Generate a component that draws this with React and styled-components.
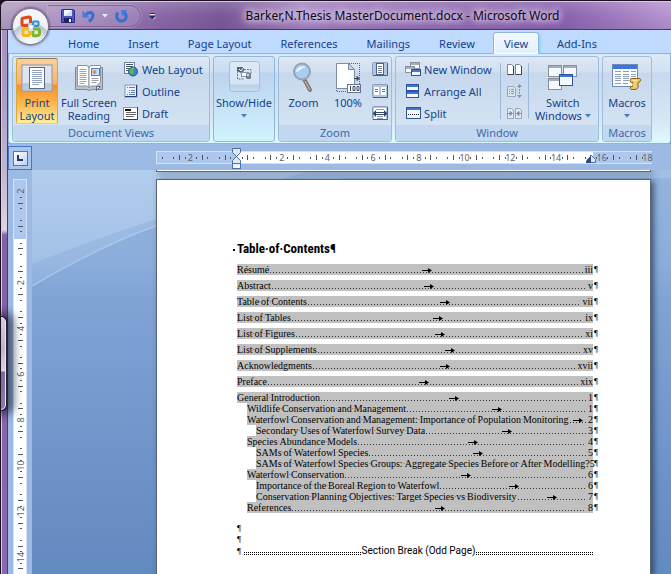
import React from "react"
import styled, { createGlobalStyle, css } from "styled-components"

const tabs = [
  "Home",
  "Insert",
  "Page Layout",
  "References",
  "Mailings",
  "Review",
  "View",
  "Add-Ins",
]

const toc = [
  { title: "Résumé", page: "iii", level: 0 },
  { title: "Abstract", page: "v", level: 0 },
  { title: "Table of Contents", page: "vii", level: 0 },
  { title: "List of Tables", page: "ix", level: 0 },
  { title: "List of Figures", page: "xi", level: 0 },
  { title: "List of Supplements", page: "xv", level: 0 },
  { title: "Acknowledgments", page: "xvii", level: 0 },
  { title: "Preface", page: "xix", level: 0 },
  { title: "General Introduction", page: "1", level: 1 },
  { title: "Wildlife Conservation and Management", page: "1", level: 2 },
  {
    title:
      "Waterfowl Conservation and Management: Importance of Population Monitoring",
    page: "2",
    level: 2,
  },
  { title: "Secondary Uses of Waterfowl Survey Data", page: "3", level: 3 },
  { title: "Species Abundance Models", page: "4", level: 2 },
  { title: "SAMs of Waterfowl Species", page: "5", level: 3 },
  {
    title:
      "SAMs of Waterfowl Species Groups: Aggregate Species Before or After Modelling?",
    page: "5",
    level: 3,
  },
  { title: "Waterfowl Conservation", page: "6", level: 2 },
  { title: "Importance of the Boreal Region to Waterfowl", page: "6", level: 3 },
  {
    title: "Conservation Planning Objectives: Target Species vs Biodiversity",
    page: "7",
    level: 3,
  },
  { title: "References", page: "8", level: 2 },
]

/* ---------- icons ---------- */

const OfficeLogo = () => (
  <svg width="22" height="24" viewBox="0 0 22 24" fill="none" strokeWidth="3">
    <path d="M8 10.500H3.500q-1.500 0-1.500-1.500V4.500Q2 3 3.500 3L9 2q1.500 0 1.500 1.500V8" stroke="#dc4a1c" />
    <path d="M13 10V7.500q0-1 1-1h3.500q1 0 1 1V10q0 1-1 1H14" stroke="#2f8fd8" strokeWidth="2" />
    <path d="M9 14H4q-1 0-1 1v4.500q0 1 1 1h4q1.500 0 1.500-1.500v-3" stroke="#f5b81c" />
    <path d="M13 14h5q1.500 0 1.500 1.500V19q0 1-1 1.200l-4 .8q-1.500 0-1.500-1.500V16" stroke="#7fb52a" />
    <rect x="9.500" y="10.500" width="3" height="3" fill="#fff" />
  </svg>
)

const SaveIcon = () => (
  <svg width="14" height="14" viewBox="0 0 14 14">
    <path d="M1 .5h11l1.500 1v12H.5V1z" fill="#4a55c0" stroke="#2a3190" />
    <rect x="3" y="1" width="8" height="6" fill="#f4f7ff" />
    <path d="M3 7 11 1v6z" fill="#cfdcf5" />
    <rect x="3" y="9" width="8" height="4.500" fill="#1e2360" />
    <rect x="8" y="10" width="2" height="3" fill="#fff" />
  </svg>
)

const UndoIcon = () => (
  <svg width="13" height="14" viewBox="0 0 13 14" fill="none">
    <path d="M4 5.500C7 2.500 11 3 11 6.500c0 3-2 4.500-4 6" stroke="#3470cf" strokeWidth="3" />
    <path d="M.5 1.500V8.500H7.500z" fill="#3f7ede" />
  </svg>
)

const RedoIcon = () => (
  <svg width="13" height="14" viewBox="0 0 13 14" fill="none">
    <path d="M3 3.500C.5 6.500 1.500 12 6.500 12s6-5.500 3-8" stroke="#3470cf" strokeWidth="3" />
    <path d="M6 1h6.500L7 7.500z" fill="#3f7ede" />
  </svg>
)

const Caret = ({ color = "#4a7ab8" }) => (
  <svg width="6" height="4" viewBox="0 0 6 4">
    <path d="M0 0h6L3 3.500z" fill={color} />
  </svg>
)

const CustomizeIcon = () => (
  <svg width="7" height="8" viewBox="0 0 7 8">
    <path d="M1 1.500h5" stroke="#20305c" />
    <path d="M1 2.500h5" stroke="#f3edfa" />
    <path d="M0 4h7L3.500 7.500z" fill="#20305c" />
    <path d="M4 7.500 7 4.500" stroke="#f3edfa" />
  </svg>
)

const PrintLayoutIcon = () => (
  <svg width="32" height="28" viewBox="0 0 32 28">
    <rect x="1" y="1" width="30" height="26" fill="#dbe4f0" stroke="#8796ad" />
    <path d="M2 19h28v7H2z" fill="#b9c9de" />
    <rect x="8.500" y="3.500" width="15" height="21" fill="#fff" stroke="#5b6b85" />
    <path
      d="M11 6.500h10M11 8.500h10M11 10.500h10M11 12.500h10M11 14.500h10M11 16.500h10M11 18.500h10M11 20.500h7"
      stroke="#94a3bd"
    />
  </svg>
)

const ReadingIcon = () => (
  <svg width="30" height="28" viewBox="0 0 30 28">
    <path d="M1.500 3.500h2V1.500h9l2.500 2 2.500-2h9v2h2v22h-11l-2.500 1-2.500-1h-11z" fill="#b8c1cd" stroke="#7d8896" />
    <path d="M3.500 1.500h8.500q3 0 3 3v19q-1-1.500-3-1.500H3.500z" fill="#fff" stroke="#8a94a2" />
    <path d="M26.500 1.500H18q-3 0-3 3v19q1-1.500 3-1.500h4.500l4-4z" fill="#fff" stroke="#8a94a2" />
    <path
      d="M5.500 5.500h7M5.500 7.500h7M5.500 9.500h7M5.500 11.500h7M5.500 13.500h7M5.500 15.500h7M5.500 17.500h7M5.500 19.500h5M17.500 14.500h7M17.500 16.500h7M17.500 18.500h5"
      stroke="#9aa3b0"
    />
    <rect x="17.500" y="4.500" width="8" height="7" fill="#bfe0ff" stroke="#4c83c8" />
    <circle cx="20.500" cy="8" r="2" fill="#f08a4a" />
    <path d="M22.500 26.500v-4h4z" fill="#e8eef5" stroke="#5c6876" />
  </svg>
)

const WebLayoutIcon = () => (
  <svg width="14" height="15" viewBox="0 0 14 15">
    <rect x=".5" y=".5" width="10" height="11" fill="#fff" stroke="#70809c" />
    <path d="M2 2.500h7M2 4.500h7M2 6.500h4M2 8.500h3" stroke="#44546f" />
    <circle cx="9" cy="9.500" r="4.500" fill="#3d7fd6" stroke="#24529a" />
    <path d="M6 7c2-2 4-2 5-1l-2 2 1 2-2 3c-2-1-3-3-2-6z" fill="#5dbb3f" />
  </svg>
)

const OutlineIcon = () => (
  <svg width="14" height="14" viewBox="0 0 14 14">
    <rect x="1" y="1" width="12" height="12" fill="#e9f0fa" stroke="#8798b8" />
    <path d="M12.500 1v11.500H1" stroke="#2c3d66" fill="none" />
    <path d="M3 3.500h1M5 3.500h6M5 6.500h1M7 6.500h4M5 8.500h1M7 8.500h4M3 10.500h1M5 10.500h6" stroke="#5d7fc0" />
  </svg>
)

const DraftIcon = () => (
  <svg width="15" height="13" viewBox="0 0 15 13">
    <rect x=".5" y=".5" width="14" height="12" fill="#fff" stroke="#8798b8" />
    <path d="M14.500 0v12.500H0" stroke="#2c3d66" fill="none" />
    <path d="M2 3h6" stroke="#111" strokeWidth="2" />
    <path d="M3 5.500h10M3 7.500h10M3 9.500h8" stroke="#666" />
  </svg>
)

const ShowHideIcon = () => (
  <svg width="16" height="15" viewBox="0 0 16 15">
    <path d="M1.500 2v11h6M8 3.500h7v4" stroke="#6f7a8d" fill="none" strokeDasharray="2 1" />
    <path d="M1 1h7v4L5 7 1 5z" fill="#5b6475" />
    <path d="m3 3 2 2 3-4" stroke="#fff" fill="none" />
    <rect x="5.500" y="6.500" width="7" height="4" fill="#fff" stroke="#8c96a8" />
    <rect x="10" y="7" width="5" height="6" rx="1" fill="#7c7f8e" />
    <rect x="11" y="8" width="2" height="2" fill="#d8dbe2" />
  </svg>
)

const ZoomIcon = () => (
  <svg width="24" height="31" viewBox="0 0 24 31">
    <path d="m12 17 6 11" stroke="#81726c" strokeWidth="4" strokeLinecap="round" />
    <path d="m13 19 5 9" stroke="#c2b0a6" strokeWidth="1.500" />
    <circle cx="10" cy="9.500" r="8" fill="#a9ccf3" stroke="#97a2b2" strokeWidth="2" />
    <path d="M4 10c0-5 7-7 10-4-4-1-6 4-10 4z" fill="#e8f3ff" />
  </svg>
)

const HundredIcon = () => (
  <svg width="26" height="31" viewBox="0 0 26 31">
    <path d="M12 1.500h12.500v21M1.500 22v7.500H12" stroke="#55617a" fill="none" strokeDasharray="1 1" />
    <path d="M1.500 1.500h12l6 6v19h-18z" fill="#fdfeff" stroke="#7d8aa3" />
    <path d="M13.500 1.500v6h6z" fill="#c8d4e6" stroke="#7d8aa3" />
    <path d="M19 16.500h4M22 14.500v4l2-2z" stroke="#36435c" fill="#36435c" />
    <rect x="12.500" y="22.500" width="13" height="8" fill="#fff" stroke="#66738e" />
    <path d="M15.500 24v5M18 24.500h2v4h-2zM22 24.500h2v4h-2z" stroke="#3c4658" fill="none" />
  </svg>
)

const PageFrame = ({ children }) => (
  <svg width="16" height="16" viewBox="0 0 16 16">
    <rect x=".5" y="1.500" width="15" height="13" rx="1" fill="#b3c6e0" stroke="#8a9dbd" />
    <path d="M15.500 2v12.500H1" stroke="#4a5d82" fill="none" />
    {children}
  </svg>
)

const OnePageIcon = () => (
  <PageFrame>
    <rect x="4.500" y="2.500" width="7" height="11" fill="#fff" stroke="#4d6187" />
    <path d="M6 5.500h4M6 7.500h4M6 9.500h4M6 11.500h4" stroke="#6b7da0" />
  </PageFrame>
)

const TwoPagesIcon = () => (
  <PageFrame>
    <rect x="2" y="4" width="5" height="8" fill="#fff" />
    <rect x="9" y="4" width="5" height="8" fill="#fff" />
    <path d="M3 6.500h3M3 8.500h3M10 6.500h3M10 8.500h3" stroke="#60759c" />
  </PageFrame>
)

const PageWidthIcon = () => (
  <PageFrame>
    <rect x="2" y="3" width="12" height="11" fill="#fff" />
    <path d="M4 4.500h8M5 11.500h6M5 13.500h6" stroke="#8b98b4" />
    <path d="M2 7.500h12M2 9.500h12" stroke="#33466c" />
    <path d="M4 5 .5 8.500 4 12zM12 5l3.500 3.500L12 12z" fill="#33466c" />
  </PageFrame>
)

const MiniWindow = ({ x, y, w, h, active }) => (
  <g>
    <rect x={x + 0.5} y={y + 0.5} width={w} height={h} fill="#f5f8fc" stroke={active ? "#2d549c" : "#8a909a"} />
    <rect x={x + 1} y={y + 1} width={w - 1} height="2" fill={active ? "#3f76dc" : "#a7adb7"} />
  </g>
)

const NewWindowIcon = () => (
  <svg width="16" height="15" viewBox="0 0 16 15">
    <MiniWindow x={5} y={0} w={9} h={6} />
    <MiniWindow x={0} y={4} w={9} h={6} />
    <MiniWindow x={6} y={7} w={9} h={6} active />
  </svg>
)

const ArrangeIcon = () => (
  <svg width="14" height="14" viewBox="0 0 14 14">
    <MiniWindow x={0} y={0} w={12} h={6} active />
    <MiniWindow x={0} y={7} w={12} h={6} active />
  </svg>
)

const SplitIcon = () => (
  <svg width="15" height="13" viewBox="0 0 15 13">
    <MiniWindow x={0} y={0} w={14} h={11} active />
    <path d="M2 7.500h11" stroke="#222" strokeDasharray="1 1" />
  </svg>
)

const SideBySideIcon = () => (
  <svg width="17" height="13" viewBox="0 0 17 13">
    <path d="M1.500 1.500h4l2 2v8h-6zM9.500 1.500h4l2 2v8h-6z" fill="#fff" stroke="#7c8598" />
    <path d="M7.500 3v8.500h-6M15.500 3v8.500h-6" stroke="#39435a" fill="none" />
  </svg>
)

const SyncScrollIcon = () => (
  <svg width="17" height="14" viewBox="0 0 17 14">
    <path d="M1.500 2.500h6l2 2v8h-8z" fill="#dfe5ee" stroke="#9aa5b8" />
    <path d="M3 5.500h1M5 5.500h3M3 7.500h1M5 7.500h3M3 9.500h1M5 9.500h3" stroke="#8793a8" />
    <path d="M13.500 2v10" stroke="#8793a8" strokeDasharray="2 1" />
    <path d="m11 3 2.500-3L16 3zM11 11l2.500 3 2.500-3z" fill="#8793a8" />
  </svg>
)

const ResetWindowIcon = () => (
  <svg width="17" height="13" viewBox="0 0 17 13">
    <path d="M1.500 1.500h4l2 2v8h-6zM9.500 1.500h4l2 2v8h-6z" fill="#e3e9f1" stroke="#9aa5b8" />
    <path d="M1 6.500h4M16 6.500h-4M4 4.500v4l2.500-2zM13 4.500v4l-2.500-2z" stroke="#8391a8" fill="#8391a8" />
  </svg>
)

const SwitchWindowsIcon = () => (
  <svg width="30" height="26" viewBox="0 0 30 26">
    <MiniWindow x={0} y={0} w={13} h={11} />
    <MiniWindow x={15} y={0} w={13} h={11} />
    <MiniWindow x={0} y={13} w={13} h={11} />
    <MiniWindow x={11} y={9} w={13} h={11} active />
  </svg>
)

const MacrosIcon = () => (
  <svg width="30" height="27" viewBox="0 0 30 27">
    <rect x=".5" y=".5" width="25" height="22" fill="#fbfdff" stroke="#6f8ab8" />
    <rect x="1" y="1" width="24" height="4" fill="#3f74d8" />
    <path
      d="M3 7.500h6M11 7.500h6M19 7.500h5M3 10.500h6M11 10.500h6M19 10.500h5M3 12.500h6M11 12.500h6M19 12.500h5M3 14.500h6M11 14.500h6M3 16.500h6M11 16.500h6M3 19.500h6M11 19.500h5"
      stroke="#8f9db8"
    />
    <path d="M19 14.500h9q1.500 1 0 3l-2 1v5q-1 2-3 2h-4q-2-1 0-3h2v-4h-2q-2-2 0-4z" fill="#f0c860" stroke="#8c6417" />
    <path d="M21 16.500h4M22 19v4" stroke="#fff1b8" />
  </svg>
)

/* ---------- rulers ---------- */

const UNIT = 22.86

const RulerMarks = ({ origin, from, to, vertical }) => {
  const marks = []
  for (let q = from * 4; q <= to * 4; q++) {
    const at = origin + (q * UNIT) / 4
    if (q === 0) continue
    if (q % 8 === 0) {
      marks.push(
        <text
          key={q}
          x={vertical ? 0 : at}
          y={vertical ? 0 : 10}
          transform={vertical ? `translate(10 ${at}) rotate(-90)` : undefined}
          textAnchor="middle"
        >
          {Math.abs(q / 4)}
        </text>
      )
    } else if (q % 4 !== 0) {
      const half = q % 2 === 0
      const a = half ? 4 : 6
      const b = half ? 9 : 8
      const p = Math.round(at)
      marks.push(
        <rect
          key={q}
          x={vertical ? a : p}
          y={vertical ? p : a}
          width={vertical ? b - a : 1}
          height={vertical ? 1 : b - a}
          fill="#4c5563"
        />
      )
    }
  }
  return <>{marks}</>
}

const HorizontalMarks = () => (
  <svg width="502" height="22" viewBox="0 -3 502 22">
    <RulerMarks origin={80} from={-3.25} to={18} />
    <path d="M76.500-2.500h8v4l-4 4-4-4zM76.500 12.500v-3l4-4 4 4v3z" fill="#dce8f8" stroke="#4c6fa8" />
    <rect x="76.500" y="12.500" width="8" height="5" fill="#eef4fc" stroke="#4c6fa8" />
    <path d="M431.500 11.500v-3l4-4 4 4v3z" fill="#dce8f8" stroke="#4c6fa8" />
    <path d="M430 12v-2l5-5v7z" fill="#2f4a78" />
  </svg>
)

const VerticalMarks = () => (
  <svg width="13" height="400" viewBox="0 0 13 400">
    <RulerMarks origin={57} from={-2} to={15} vertical />
  </svg>
)

/* ---------- ribbon parts ---------- */

const BigButton = ({ icon, lines, caret, active }) => (
  <Big $active={active}>
    <BigIcon>{icon}</BigIcon>
    {lines.map((line, i) => (
      <BigLine key={line}>
        {line}
        {caret && i === 1 && <Caret />}
      </BigLine>
    ))}
    {caret && lines.length === 1 && (
      <BigLine>
        <Caret />
      </BigLine>
    )}
  </Big>
)

const SmallButton = ({ icon, label }) => (
  <Small>
    <SmallIcon>{icon}</SmallIcon>
    {label}
  </Small>
)

const IconButton = ({ icon, label, disabled }) => (
  <IconOnly aria-label={label} disabled={disabled}>
    {icon}
  </IconOnly>
)

/* spaces are shown as formatting marks */
const MarkedText = ({ children }) => (
  <span>
    {children.split(" ").map((word, i) => (
      <React.Fragment key={i}>
        {i > 0 && <SpaceMark>·</SpaceMark>}
        {word}
      </React.Fragment>
    ))}
  </span>
)

const TocEntry = ({ title, page, level }) => (
  <TocRow $level={level}>
    <TocLink href="#">
      <MarkedText>{title}</MarkedText>
      <Leader>
        <svg width="10" height="5" viewBox="0 0 10 5">
          <path d="M0 2h6V0l4 2.500L6 5V3H0z" fill="#000" />
        </svg>
      </Leader>
      <span>{page}</span>
    </TocLink>
    <Pilcrow>¶</Pilcrow>
  </TocRow>
)

const App = () => {
  return (
    <>
      <GlobalStyle />
      <Window>
        <TitleBar>
          <OfficeButton aria-label="Office Button">
            <OfficeLogo />
          </OfficeButton>
          <QuickAccess>
            <IconButton icon={<SaveIcon />} label="Save" />
            <IconButton icon={<UndoIcon />} label="Undo" />
            <IconButton icon={<Caret color="#dcecff" />} label="Undo history" />
            <IconButton icon={<RedoIcon />} label="Redo" />
          </QuickAccess>
          <IconButton icon={<CustomizeIcon />} label="Customize toolbar" />
          <WindowTitle>
            Barker,N.Thesis MasterDocument.docx - Microsoft Word
          </WindowTitle>
        </TitleBar>
        <Frame>
          <LeftEdge />
          <Client>
            <TabStrip role="tablist">
              {tabs.map(tab => (
                <Tab
                  key={tab}
                  role="tab"
                  aria-selected={tab === "View"}
                  $active={tab === "View"}
                >
                  {tab}
                </Tab>
              ))}
            </TabStrip>

            <Ribbon>
              <Group $width={198}>
                <GroupBody>
                  <BigButton icon={<PrintLayoutIcon />} lines={["Print", "Layout"]} active />
                  <BigButton icon={<ReadingIcon />} lines={["Full Screen", "Reading"]} />
                  <Column>
                    <SmallButton icon={<WebLayoutIcon />} label="Web Layout" />
                    <SmallButton icon={<OutlineIcon />} label="Outline" />
                    <SmallButton icon={<DraftIcon />} label="Draft" />
                  </Column>
                </GroupBody>
                <GroupLabel>Document Views</GroupLabel>
              </Group>
              <Group $width={62} $collapsed>
                <ShowHide>
                  <ShowHideBox>
                    <ShowHideIcon />
                  </ShowHideBox>
                  <BigLine>Show/Hide</BigLine>
                  <BigLine>
                    <Caret />
                  </BigLine>
                </ShowHide>
              </Group>
              <Group $width={114}>
                <GroupBody $spread>
                  <BigButton icon={<ZoomIcon />} lines={["Zoom"]} />
                  <BigButton icon={<HundredIcon />} lines={["100%"]} />
                  <Column>
                    <IconButton icon={<OnePageIcon />} label="One Page" />
                    <IconButton icon={<TwoPagesIcon />} label="Two Pages" />
                    <IconButton icon={<PageWidthIcon />} label="Page Width" />
                  </Column>
                </GroupBody>
                <GroupLabel>Zoom</GroupLabel>
              </Group>
              <Group $width={204}>
                <GroupBody $spread>
                  <Column>
                    <SmallButton icon={<NewWindowIcon />} label="New Window" />
                    <SmallButton icon={<ArrangeIcon />} label="Arrange All" />
                    <SmallButton icon={<SplitIcon />} label="Split" />
                  </Column>
                  <Column $ruled>
                    <IconButton icon={<SideBySideIcon />} label="View Side by Side" />
                    <IconButton icon={<SyncScrollIcon />} label="Synchronous Scrolling" disabled />
                    <IconButton icon={<ResetWindowIcon />} label="Reset Window Position" disabled />
                  </Column>
                  <BigButton icon={<SwitchWindowsIcon />} lines={["Switch", "Windows"]} caret />
                </GroupBody>
                <GroupLabel>Window</GroupLabel>
              </Group>
              <Group $width={50}>
                <GroupBody $spread>
                  <BigButton icon={<MacrosIcon />} lines={["Macros"]} caret />
                </GroupBody>
                <GroupLabel>Macros</GroupLabel>
              </Group>
            </Ribbon>

            <Workspace>
              <RulerCorner>
                <TabStop aria-label="Left tab">
                  <svg width="6" height="6" viewBox="0 0 6 6">
                    <path d="M1 0v5h5" stroke="#22395f" strokeWidth="2" fill="none" />
                  </svg>
                </TabStop>
              </RulerCorner>
              <HorizontalRuler>
                <HorizontalScale>
                  <HorizontalMarks />
                </HorizontalScale>
              </HorizontalRuler>
              <VerticalRuler>
                <VerticalScale>
                  <VerticalMarks />
                </VerticalScale>
              </VerticalRuler>
              <Canvas>
                <Swoosh viewBox="0 0 639 404" preserveAspectRatio="none">
                  <path d="M0 94Q60 70 124 49T280 0H639V404H0z" fill="#6f97cc" opacity=".22" />
                  <path d="M0 116Q70 75 124 56T310 8H639V404H0z" fill="#5c88c4" opacity=".2" />
                  <path d="M0 116Q70 75 124 56" stroke="#c5daf3" strokeWidth="1.500" opacity=".5" fill="none" />
                </Swoosh>
                <PreviousPage />
                <Page>
                  <Heading>Table·of·Contents¶</Heading>
                  <Toc>
                    {toc.map(entry => (
                      <TocEntry key={entry.title} {...entry} />
                    ))}
                  </Toc>
                  <Paragraph>¶</Paragraph>
                  <Paragraph>¶</Paragraph>
                  <SectionBreak>
                    <Pilcrow>¶</Pilcrow>
                    <BreakDots />
                    <BreakLabel>Section Break (Odd Page)</BreakLabel>
                    <BreakDots />
                  </SectionBreak>
                </Page>
              </Canvas>
            </Workspace>
          </Client>
        </Frame>
        <OtherWindow />
      </Window>
    </>
  )
}

const GlobalStyle = createGlobalStyle`
  * {
    box-sizing: border-box;
  }
  body {
    margin: 0;
    background: #1c1226;
    font-family: "Noto Sans", "Open Sans", sans-serif;
    font-size: 11px;
  }
  button {
    border: 0;
    padding: 0;
    background: none;
    font: inherit;
    color: inherit;
  }
  svg {
    display: block;
    flex: none;
  }
`

const Window = styled.div`
  position: relative;
  display: flex;
  flex-direction: column;
  height: 100vh;
  overflow: hidden;
  border: 1px solid #1a1020;
  border-right: 0;
  border-bottom: 0;
  border-radius: 7px 0 0 0;
  background: #9d80bf;
`

const TitleBar = styled.header`
  position: relative;
  display: flex;
  align-items: center;
  flex: none;
  height: 29px;
  padding: 0 0 0 47px;
  border-top: 1px solid #d9c9e6;
  border-bottom: 1px solid #4b3763;
  background:
    linear-gradient(rgba(255, 255, 255, 0.15), rgba(255, 255, 255, 0) 50%, rgba(90, 60, 130, 0.15)),
    linear-gradient(90deg, #b3a1c0 0, #a58bb9 10%, #8a68a6 24%, #7a5897 33%, #a584c0 45%, #9370b4 62%, #8a62ad 84%, #b795d2);
`

const OfficeButton = styled.button`
  position: absolute;
  left: 11px;
  top: 6px;
  z-index: 2;
  display: flex;
  align-items: center;
  justify-content: center;
  width: 37px;
  height: 37px;
  border: 1px solid #77718a;
  border-radius: 50%;
  background: radial-gradient(circle at 50% 100%, #fff 0, #dfe5ee 35%, #b8c3d4 52%, #eef1f6 56%, #f8fafc 100%);
  box-shadow: 0 0 2px 1px rgba(50, 40, 80, 0.5);
`

const QuickAccess = styled.div`
  display: flex;
  align-items: center;
  gap: 7px;
  height: 22px;
  margin: 0 8px 0 0;
  padding: 0 12px 0 13px;
  border: 1px solid #80699a;
  border-left: 0;
  border-radius: 0 11px 11px 0;
  background: rgba(200, 180, 220, 0.25);
  box-shadow: 0 0 0 1px rgba(225, 210, 240, 0.25);
`

const WindowTitle = styled.span`
  flex: 1;
  padding-right: 22px;
  color: #0c0812;
  font-size: 12px;
  white-space: nowrap;
  text-align: center;
  text-shadow: 0 0 6px #e6daf0, 0 0 8px #e6daf0, 0 0 10px #e6daf0;
`

const Frame = styled.div`
  display: flex;
  flex: 1;
  min-height: 0;
`

const LeftEdge = styled.div`
  flex: none;
  width: 7px;
  border-left: 1px solid #d9cce4;
  border-right: 1px solid #4b3f66;
  background: linear-gradient(#a891bd 0, #ab9bc6 60px, #c4bad3 150px, #ded4e2 200px, #8063a5 205px, #8a69b0);
`

const Client = styled.main`
  display: flex;
  flex-direction: column;
  flex: 1;
  min-width: 0;
`

const TabStrip = styled.nav`
  display: flex;
  align-items: flex-end;
  gap: 7px;
  flex: none;
  height: 24px;
  padding-left: 49px;
  background: #bfdbff;
  border-bottom: 1px solid #8db2e3;
`

const Tab = styled.button`
  height: 22px;
  margin-bottom: -1px;
  padding: 0 10px;
  border: 1px solid transparent;
  border-bottom: 0;
  border-radius: 3px 3px 0 0;
  color: #15428b;
  white-space: nowrap;
  ${({ $active }) =>
    $active &&
    css`
      border-color: #8db2e3;
      background: linear-gradient(#f2f9ff, #e1eefb);
      box-shadow: inset 0 0 1px 1px #fff, 2px 2px 2px rgba(90, 220, 235, 0.5);
    `}
`

const Ribbon = styled.section`
  display: flex;
  gap: 3px;
  flex: none;
  height: 90px;
  padding: 2px 3px;
  border: 1px solid #8db2e3;
  border-top: 0;
  border-radius: 0 0 3px 3px;
  background: linear-gradient(#dbe8f7 0, #d2e2f4 18px, #c7d9ee 19px, #d8e7f5 68px, #e0fbff 100%);
  box-shadow: inset 0 -2px 1px #d5f9ff;
`

const Group = styled.div`
  display: flex;
  flex-direction: column;
  flex: none;
  min-width: ${({ $width }) => $width}px;
  height: 86px;
  overflow: hidden;
  border: 1px solid #9dbfdb;
  border-radius: 3px;
  background: linear-gradient(#dee8f5 0, #d1dfef 15px, #c7d8ed 16px, #d8e6f4 100%);
  color: #15428b;
  ${({ $collapsed }) =>
    $collapsed &&
    css`
      border-color: #8fb8d6;
      background: linear-gradient(#d5e4f6 0, #c8dcf3 15px, #bcd3ef 16px, #d0f3fd 100%);
    `}
`

const GroupBody = styled.div`
  display: flex;
  flex: 1;
  justify-content: ${({ $spread }) => ($spread ? "space-evenly" : "flex-start")};
  gap: 2px;
  padding: 1px 3px;
`

const GroupLabel = styled.div`
  height: 16px;
  line-height: 15px;
  background: #c1d8f0;
  color: #3e6aaa;
  text-align: center;
`

const Big = styled.button`
  display: flex;
  flex-direction: column;
  align-items: center;
  height: 66px;
  min-width: 42px;
  border: 1px solid transparent;
  border-radius: 2px;
  ${({ $active }) =>
    $active &&
    css`
      border-color: #8b7654 #d9a83c #f0cf58;
      background: linear-gradient(#fbcf9b 0, #f9b266 25px, #f88f2c 26px, #fbb84e 45px, #fff09a 100%);
    `}
`

const BigIcon = styled.span`
  display: flex;
  align-items: center;
  justify-content: center;
  height: 37px;
`

const BigLine = styled.span`
  display: flex;
  align-items: center;
  justify-content: center;
  gap: 3px;
  height: 13px;
  line-height: 13px;
  white-space: nowrap;
`

const IconOnly = styled.button`
  display: flex;
  align-items: center;
  justify-content: center;
`

const Column = styled.div`
  display: flex;
  flex-direction: column;
  height: 66px;
  ${IconOnly} {
    flex: 0 1 22px;
  }
  ${({ $ruled }) =>
    $ruled &&
    css`
      padding: 0 6px;
      background:
        linear-gradient(#9bb9dc, #9bb9dc) 0 5px / 1px 56px no-repeat,
        linear-gradient(#9bb9dc, #9bb9dc) 100% 5px / 1px 56px no-repeat;
    `}
`

const Small = styled.button`
  display: flex;
  align-items: center;
  gap: 3px;
  height: 22px;
  padding: 0 3px;
  white-space: nowrap;
`

const SmallIcon = styled.span`
  display: flex;
  justify-content: center;
  width: 16px;
`

const ShowHide = styled.button`
  display: flex;
  flex-direction: column;
  align-items: center;
  padding-top: 4px;
`

const ShowHideBox = styled.span`
  display: flex;
  align-items: center;
  justify-content: center;
  width: 31px;
  height: 31px;
  margin-bottom: 4px;
  padding-bottom: 6px;
  border: 1px solid #a4c0dd;
  border-radius: 3px;
  background: linear-gradient(#dce8f6 0, #d5e4f5 22px, #b9d0ea 23px, #c6dcf2 100%);
`

const Workspace = styled.section`
  display: grid;
  grid-template-columns: 24px 1fr;
  grid-template-rows: 26px 1fr;
  flex: 1;
  min-height: 0;
  background: #9cbae3;
`

const RulerCorner = styled.div`
  display: flex;
  align-items: center;
  justify-content: center;
  margin-top: 2px;
  border: 1px solid #4676c8;
  background: #a9c5ec;
`

const TabStop = styled.button`
  display: flex;
  align-items: center;
  justify-content: center;
  width: 15px;
  height: 15px;
  border: 1px solid #4676c8;
  background: linear-gradient(135deg, #fff, #bcd0ee);
`

const HorizontalRuler = styled.div`
  padding: 7px 19px 0 124px;
  overflow: hidden;
`

const rulerText = css`
  text {
    font: 9px "Noto Sans", sans-serif;
    fill: #5a6270;
  }
`

const HorizontalScale = styled.div`
  height: 13px;
  border: 1px solid #d3e2f6;
  border-width: 1px 0 1px 1px;
  background: linear-gradient(90deg, #adc8ec 79px, #fff 79px, #fff 436px, #adc8ec 436px);
  svg {
    margin: -4px 0 0 -1px;
  }
  ${rulerText}
`

const VerticalRuler = styled.div`
  padding: 9px 5px 0;
  overflow: hidden;
`

const VerticalScale = styled.div`
  height: 100%;
  border: 1px solid #d3e2f6;
  border-bottom: 0;
  background: linear-gradient(#adc8ec 59px, #fff 59px);
  ${rulerText}
`

const Canvas = styled.div`
  position: relative;
  display: flex;
  flex-direction: column;
  gap: 7px;
  padding: 0 20px 0 124px;
  overflow: hidden;
  background: linear-gradient(#b2cdec 0, #a3c1e8 90px, #92b2de 130px, #7d9fd0 250px, #6389bd 404px);
`

const Swoosh = styled.svg`
  position: absolute;
  inset: 0;
  width: 100%;
  height: 100%;
`

const paperEdge = css`
  position: relative;
  border: 1px solid #5c6470;
  background: #fff;
  box-shadow: 3px 2px 6px rgba(40, 55, 85, 0.75);
`

const PreviousPage = styled.div`
  ${paperEdge}
  flex: none;
  height: 2px;
  border-top: 0;
`

const Page = styled.article`
  ${paperEdge}
  flex: 1;
  padding: 59px 57px 0 80px;
  border-bottom: 0;
  color: #000;
  font: 10px/11px "Liberation Serif", serif;
`

const Heading = styled.h1`
  position: relative;
  margin: 0 0 5px;
  font: bold 13px/20px "Arial Narrow", "Roboto Condensed", "Liberation Sans", sans-serif;
  white-space: nowrap;
  &::before {
    content: "";
    position: absolute;
    left: -4px;
    top: 10px;
    width: 2px;
    height: 2px;
    background: #000;
  }
`

const Toc = styled.ol`
  margin: 0 0 10px;
  padding: 0;
  list-style: none;
`

const TocRow = styled.li`
  display: flex;
  height: 11px;
  margin-left: ${({ $level }) => [0, 0, 10, 19][$level]}px;
  margin-bottom: ${({ $level }) => ($level === 0 ? 5 : 0)}px;
`

const TocLink = styled.a`
  display: flex;
  flex: 1;
  min-width: 0;
  background: #c0c0c0;
  color: #000;
  text-decoration: none;
  white-space: nowrap;
`

const SpaceMark = styled.span`
  font-size: 6px;
  line-height: 1px;
  vertical-align: 1px;
`

const Leader = styled.span`
  display: flex;
  align-items: center;
  justify-content: center;
  flex: 1;
  min-width: 0;
  height: 11px;
  overflow: hidden;
  background: repeating-linear-gradient(90deg, #333 0 1px, transparent 1px 3px) 1px 8px / calc(100% - 3px) 1px no-repeat;
  svg {
    margin-top: 2px;
  }
`

const Pilcrow = styled.span`
  flex: none;
  width: 6px;
  margin-right: -6px;
  padding-left: 1px;
  font-size: 9px;
`

const Paragraph = styled.p`
  margin: 0;
  font-size: 9px;
`

const SectionBreak = styled.div`
  display: flex;
  align-items: center;
  gap: 1px;
  ${Pilcrow} {
    margin-right: 0;
    padding-left: 0;
  }
`

const BreakLabel = styled.span`
  font: 10px/12px Roboto, "Noto Sans", sans-serif;
  white-space: nowrap;
`

const BreakDots = styled.i`
  flex: 1;
  height: 3px;
  margin-top: 4px;
  background:
    repeating-linear-gradient(90deg, transparent 0 1px, #fff 1px 2px),
    linear-gradient(#000 1px, transparent 1px 2px, #000 2px);
`

/* edge of another window that peeks in from the left */
const OtherWindow = styled.aside`
  position: absolute;
  left: -6px;
  top: 316px;
  width: 11px;
  height: 93px;
  border: 1px solid #ece6f2;
  border-radius: 0 5px 5px 0;
  background: linear-gradient(#d6cddb 0, #bfb5ca 30px, #ddd4e2 53px, #7b6a98 54px, #8d7cab 100%);
  box-shadow: 1px 0 0 1px #2a2236, 3px 0 9px 5px rgba(20, 22, 45, 0.6);
`

export default App
